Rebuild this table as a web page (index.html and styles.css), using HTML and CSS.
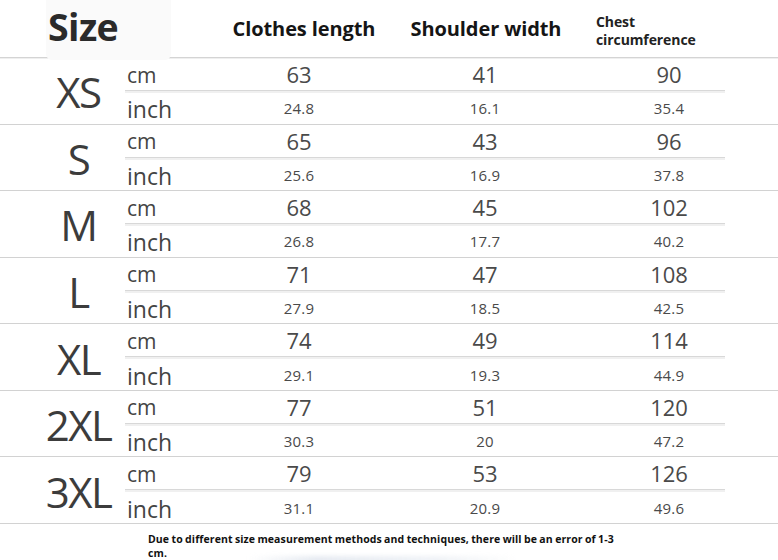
FILE: index.html
```html
<!DOCTYPE html>
<html>
<head>
<meta charset="utf-8">
<link rel="stylesheet" href="styles.css">
</head>
<body>
<div class="chart">
  <div class="head">
    <div class="size-title">Size</div>
    <div class="h-unit"></div>
    <div class="h-col h-clothes">Clothes length</div>
    <div class="h-col h-shoulder">Shoulder width</div>
    <div class="h-chest">Chest<br>circumference</div>
  </div>

  <div class="group">
    <div class="label">XS</div>
    <div class="rows">
      <div class="row cm"><span class="unit">cm</span><span class="v">63</span><span class="v">41</span><span class="v last">90</span></div>
      <div class="row in"><span class="unit">inch</span><span class="v">24.8</span><span class="v">16.1</span><span class="v last">35.4</span></div>
    </div>
  </div>
  <div class="group">
    <div class="label">S</div>
    <div class="rows">
      <div class="row cm"><span class="unit">cm</span><span class="v">65</span><span class="v">43</span><span class="v last">96</span></div>
      <div class="row in"><span class="unit">inch</span><span class="v">25.6</span><span class="v">16.9</span><span class="v last">37.8</span></div>
    </div>
  </div>
  <div class="group">
    <div class="label">M</div>
    <div class="rows">
      <div class="row cm"><span class="unit">cm</span><span class="v">68</span><span class="v">45</span><span class="v last">102</span></div>
      <div class="row in"><span class="unit">inch</span><span class="v">26.8</span><span class="v">17.7</span><span class="v last">40.2</span></div>
    </div>
  </div>
  <div class="group">
    <div class="label">L</div>
    <div class="rows">
      <div class="row cm"><span class="unit">cm</span><span class="v">71</span><span class="v">47</span><span class="v last">108</span></div>
      <div class="row in"><span class="unit">inch</span><span class="v">27.9</span><span class="v">18.5</span><span class="v last">42.5</span></div>
    </div>
  </div>
  <div class="group">
    <div class="label">XL</div>
    <div class="rows">
      <div class="row cm"><span class="unit">cm</span><span class="v">74</span><span class="v">49</span><span class="v last">114</span></div>
      <div class="row in"><span class="unit">inch</span><span class="v">29.1</span><span class="v">19.3</span><span class="v last">44.9</span></div>
    </div>
  </div>
  <div class="group">
    <div class="label">2XL</div>
    <div class="rows">
      <div class="row cm"><span class="unit">cm</span><span class="v">77</span><span class="v">51</span><span class="v last">120</span></div>
      <div class="row in"><span class="unit">inch</span><span class="v">30.3</span><span class="v">20</span><span class="v last">47.2</span></div>
    </div>
  </div>
  <div class="group">
    <div class="label">3XL</div>
    <div class="rows">
      <div class="row cm"><span class="unit">cm</span><span class="v">79</span><span class="v">53</span><span class="v last">126</span></div>
      <div class="row in"><span class="unit">inch</span><span class="v">31.1</span><span class="v">20.9</span><span class="v last">49.6</span></div>
    </div>
  </div>

  <div class="note">
    <p>Due to different size measurement methods and techniques, there will be an error of 1-3 cm.</p>
    <div class="smear"></div>
  </div>
</div>
</body>
</html>
```

FILE: styles.css
```css
html, body {
  margin: 0;
  padding: 0;
  background: #ffffff;
}

.chart {
  width: 778px;
  height: 560px;
  overflow: hidden;
  font-family: "Open Sans", "Noto Sans", sans-serif;
  color: #444;
}

.head {
  height: 58px;
  box-sizing: border-box;
  display: flex;
  align-items: stretch;
  border-bottom: 1px solid #d4d4d4;
  box-shadow: 0 1px 0 #efefef;
}

.size-title {
  margin-left: 46px;
  width: 125px;
  height: 60px;
  box-sizing: border-box;
  padding-left: 2px;
  padding-top: 3px;
  font-size: 37.5px;
  font-weight: 700;
  color: #2a2a2a;
  line-height: 48px;
  background: #fafafa;
  border-radius: 0 0 6px 6px;
  letter-spacing: -0.6px;
  position: relative;
  z-index: 1;
}

.h-unit { width: 34px; }

.h-col {
  font-weight: 700;
  font-size: 20px;
  color: #151515;
  text-align: center;
  padding-top: 15px;
  line-height: 28px;
  letter-spacing: -0.1px;
}

.h-clothes { width: 198px; }
.h-shoulder { width: 166px; }

.h-chest {
  padding-left: 27px;
  padding-top: 13px;
  font-size: 14px;
  font-weight: 700;
  color: #222;
  line-height: 18px;
  letter-spacing: -0.1px;
}

.group {
  height: 66.57px;
  box-sizing: border-box;
  display: flex;
  border-bottom: 1px solid #d2d2d2;
}

.label {
  width: 125px;
  display: flex;
  align-items: center;
  justify-content: center;
  padding-left: 32px;
  box-sizing: border-box;
  font-size: 42px;
  color: #3c3c3c;
  letter-spacing: -1.5px;
  padding-top: 2px;
}

.rows {
  width: 600px;
  display: flex;
  flex-direction: column;
}

.row {
  display: grid;
  grid-template-columns: 80px 188px 184px 148px;
  align-items: center;
}

.row.cm {
  height: 32px;
  border-bottom: 1px solid #d8d8d8;
  box-shadow: 0 2px 0 #f0f0f0;
}

.row.in {
  flex: 1;
  padding-top: 2px;
}

.unit {
  padding-left: 2px;
  color: #444;
}

.cm .unit {
  font-size: 21px;
  line-height: 24px;
  padding-top: 1px;
}

.in .unit {
  font-size: 23px;
  line-height: 24px;
  padding-top: 2px;
}

.v {
  text-align: center;
  color: #4a4a4a;
}

.v.last {
  padding-left: 36px;
}

.cm .v {
  font-size: 22px;
  line-height: 26px;
}

.in .v {
  font-size: 15px;
  line-height: 20px;
  letter-spacing: 0.2px;
}

.note {
  padding-left: 148px;
  padding-top: 8px;
  width: 480px;
}

.note p {
  margin: 0;
  font-size: 10.5px;
  line-height: 14px;
  font-weight: 700;
  color: #111;
  letter-spacing: 0.1px;
  word-spacing: -0.5px;
}

.smear {
  margin-top: -4px;
  margin-left: 100px;
  width: 270px;
  height: 12px;
  background: linear-gradient(90deg, rgba(200,210,225,0), rgba(200,210,225,0.45) 25%, rgba(212,220,232,0.35) 70%, rgba(220,225,235,0));
  filter: blur(2px);
}
```
